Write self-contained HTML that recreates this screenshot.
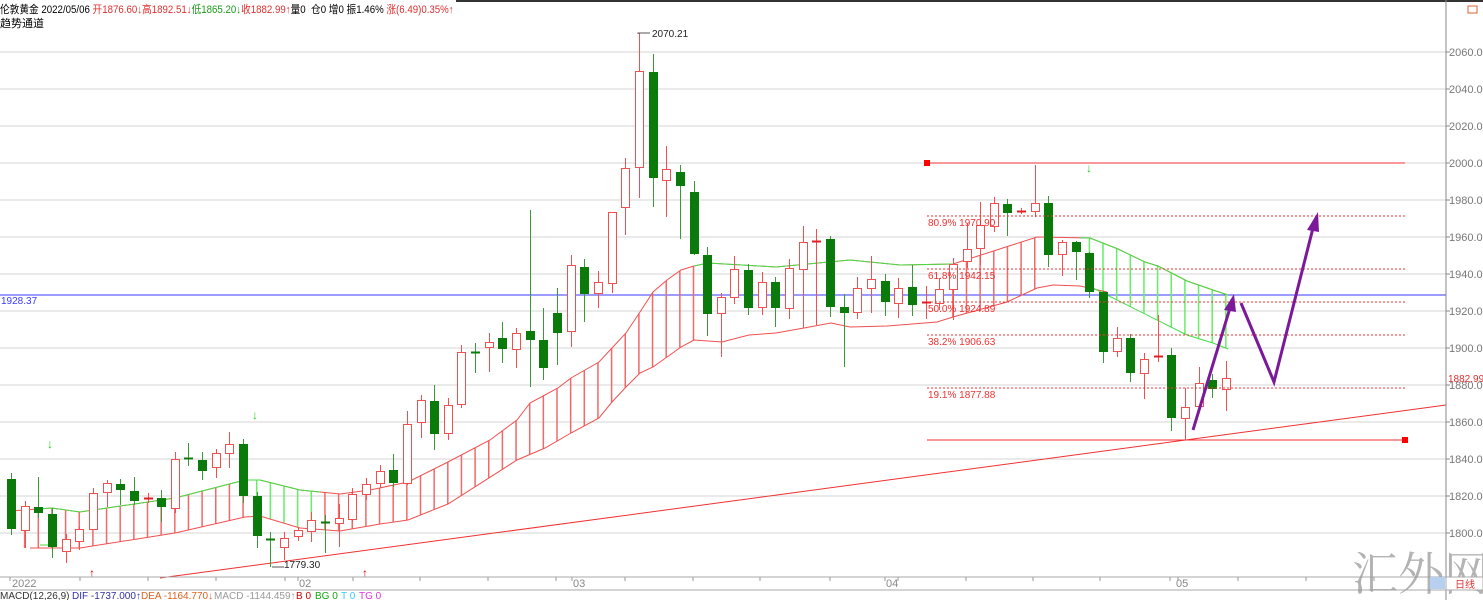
<!DOCTYPE html>
<html><head><meta charset="utf-8"><style>
html,body{margin:0;padding:0;background:#fff;width:1483px;height:600px;overflow:hidden;font-family:"Liberation Sans","Noto Sans CJK SC",sans-serif}
svg{position:absolute;left:0;top:0}
.hd{position:absolute;left:0;font-size:11px;white-space:nowrap;color:#000;line-height:12px;transform-origin:0 0}
.r{color:#e03030}.g{color:#1a9a1a}
</style></head><body>
<svg id="s" width="1483" height="600" xmlns="http://www.w3.org/2000/svg" font-family="Liberation Sans, Noto Sans CJK SC, sans-serif">
<rect x="456" y="0" width="1027" height="2" fill="#333"/>
<g id="grid"></g>
<line x1="0" y1="295" x2="1446" y2="295" stroke="#3a3aff" stroke-width="1"/>
<text x="1" y="304" font-size="10" fill="#3a3aff">1928.37</text>
<line x1="160" y1="578" x2="1446" y2="405" stroke="#f03030" stroke-width="1"/>
<g id="band"></g>
<g id="candles"></g>
<g stroke="#f03030" stroke-width="1" stroke-dasharray="2,2">
<line x1="927" y1="216" x2="1405" y2="216"/>
<line x1="927" y1="269" x2="1405" y2="269"/>
<line x1="927" y1="302" x2="1405" y2="302"/>
<line x1="927" y1="335" x2="1405" y2="335"/>
<line x1="927" y1="388" x2="1405" y2="388"/>
</g>
<g font-size="10" fill="#f03030">
<text x="928" y="226">80.9% 1970.90</text>
<text x="928" y="279">61.8% 1942.15</text>
<text x="928" y="312">50.0% 1924.89</text>
<text x="928" y="345">38.2% 1906.63</text>
<text x="928" y="398">19.1% 1877.88</text>
</g>
<line x1="927" y1="163" x2="1405" y2="163" stroke="#f03030"/>
<rect x="924" y="160" width="6" height="6" fill="#f00"/>
<line x1="927" y1="440" x2="1405" y2="440" stroke="#f03030"/>
<rect x="1402" y="437" width="6" height="6" fill="#f00"/>
<polyline points="638,34 638,33 650,33" fill="none" stroke="#555"/>
<text x="652" y="37" font-size="10" fill="#222">2070.21</text>
<polyline points="272,567 284,567" fill="none" stroke="#555"/>
<text x="284" y="568" font-size="10" fill="#222">1779.30</text>
<g fill="#2c2" font-size="12" font-weight="bold"><text x="47" y="448">↓</text><text x="252" y="419">↓</text><text x="1086" y="172">↓</text></g>
<g fill="#c00" font-size="12" font-weight="bold"><text x="89" y="577">↑</text><text x="362" y="577">↑</text></g>
<g stroke="#7a1a9a" stroke-width="3" fill="none" stroke-linejoin="miter">
<line x1="1193" y1="430" x2="1230" y2="308"/>
<polyline points="1241,303 1274,382 1313,228"/>
</g>
<g fill="#7a1a9a">
<polygon points="1234,294 1224,310 1236,312"/>
<polygon points="1318,212 1307,230 1319,232"/>
</g>
<line x1="1446" y1="0" x2="1446" y2="600" stroke="#888"/>
<g id="ax" font-size="11" fill="#777"></g>
<text x="1448" y="382" font-size="10" fill="#e03030">1882.99</text>
<line x1="0" y1="577" x2="1446" y2="577" stroke="#aaa"/>
<line x1="0" y1="590" x2="1483" y2="590" stroke="#aaa"/>
<g id="tk" stroke="#999"></g>
<g font-size="11" fill="#888"><text x="12" y="587">2022</text><text x="299" y="587">02</text><text x="573" y="587">03</text><text x="886" y="587">04</text><text x="1176" y="587">05</text></g>
<text x="1352" y="590" font-size="46" fill="#999" fill-opacity="0.75" font-family="Liberation Serif, Noto Serif CJK SC, serif">汇外网</text>
<rect x="1430" y="577" width="15" height="12" fill="#b8d0f0"/>
<rect x="1446" y="577" width="37" height="13" fill="#fff" stroke="#aaa"/>
<text x="1455" y="588" font-size="10" fill="#e03030">日线</text>
<rect x="1468" y="6" width="9" height="7" fill="none" stroke="#e06030"/>
<g font-size="10"><text x="0" y="599" fill="#333">MACD(12,26,9)</text><text x="72" y="599" fill="#3030a0">DIF -1737.000↑</text><text x="141" y="599" fill="#e06020">DEA -1164.770↓</text><text x="214" y="599" fill="#999">MACD -1144.459↑</text><text x="296" y="599" fill="#c00">B 0</text><text x="315" y="599" fill="#1a1">BG 0</text><text x="341" y="599" fill="#3cf">T 0</text><text x="359" y="599" fill="#d3d">TG 0</text></g>
</svg>
<div class="hd" style="top:4px;transform:scaleX(0.88)">伦敦黄金 2022/05/06 <span class="r">开1876.60↓高1892.51↓</span><span class="g">低1865.20↓</span><span class="r">收1882.99↑</span>量0 &nbsp;仓0 增0 振1.46% <span class="r">涨(6.49)0.35%↑</span></div>
<div class="hd" style="top:18px">趋势通道</div>
<script>
var NS="http://www.w3.org/2000/svg";
function el(p,t,a){var e=document.createElementNS(NS,t);for(var k in a)e.setAttribute(k,a[k]);document.getElementById(p).appendChild(e);return e;}
for(var k=0;k<14;k++){var y=52+37*k;el("grid","line",{x1:0,y1:y,x2:1446,y2:y,stroke:"#d4d4d4"});
 el("ax","line",{x1:1446,y1:y,x2:1450,y2:y,stroke:"#888"});
 var t=el("ax","text",{x:1449,y:y+4});t.textContent=(2060-20*k)+".00";}
[10,80,148,216,285,298,353,420,488,556,572,625,693,760,830,885,898,966,1033,1100,1170,1178,1238,1306,1374,1442].forEach(function(x){el("tk","line",{x1:x,y1:577,x2:x,y2:581});});
var C=[["g",479,529,473,535],["r",506,530,501,548],["g",507,513,477,518],["g",514,547,508,558],["r",539,551,534,563],["r",529,541,527,550],["r",493,529,488,530],["r",483,492,480,507],["g",484,490,479,505],["g",491,501,477,505],["r",498,498,493,503],["g",498,507,490,522],["r",459,508,452,513],["g",458,458,443,466],["g",460,471,452,480],["r",453,467,449,478],["r",444,453,432,468],["g",444,496,439,503],["g",496,536,492,548],["g",539,539,532,567],["r",538,547,532,560],["r",530,536,527,541],["r",520,531,512,542],["g",522,522,515,553],["r",518,523,504,547],["r",494,519,488,522],["r",484,494,478,500],["r",471,483,465,488],["g",470,483,454,487],["r",424,483,411,485],["r",400,422,395,438],["g",401,434,385,450],["r",405,433,398,440],["r",352,404,345,408],["g",352,352,343,373],["r",342,347,333,372],["g",338,349,322,363],["r",333,349,328,368],["g",331,340,210,387],["g",340,368,308,380],["g",313,333,288,365],["r",265,331,255,347],["g",267,294,259,322],["r",282,293,271,308],["r",212,283,212,293],["r",168,207,158,235],["r",71,167,33,198],["g",72,178,54,207],["r",169,180,146,217],["g",172,186,165,239],["g",192,254,181,255],["g",255,314,247,336],["r",297,313,293,357],["r",269,297,256,304],["g",270,308,264,315],["r",282,307,272,315],["g",282,308,277,327],["r",268,308,259,319],["r",242,269,226,328],["r",241,241,229,325],["g",239,307,236,317],["g",307,313,294,367],["r",288,312,277,319],["r",279,288,256,313],["g",281,302,274,316],["r",288,303,278,318],["g",287,305,265,316],["r",302,302,286,319],["r",289,303,278,310],["r",264,289,258,320],["r",249,261,223,268],["r",225,248,202,265],["r",203,226,197,232],["g",204,213,199,236],["r",211,211,208,214],["r",203,211,165,217],["g",203,255,196,267],["r",242,254,240,276],["g",242,252,241,280],["g",253,292,252,298],["g",292,352,291,363],["r",338,351,327,357],["g",338,373,334,382],["r",359,373,353,399],["r",356,356,315,362],["g",355,418,348,431],["r",407,418,388,440],["r",383,406,367,407],["g",380,389,374,398],["r",378,389,361,411]];
function X(i){return 11+13.65*i;}
var up=[[11,511],[52,508],[80,512],[175,498],[245,480],[260,480],[300,490],[340,494],[370,490],[408,482],[448,462],[490,440],[517,420],[530,403],[558,388],[571,378],[599,362],[612,348],[626,333],[640,312],[653,292],[667,280],[681,270],[694,266],[708,263],[776,267],[850,260],[900,265],[953,264],[1037,237],[1090,238],[1118,249],[1145,262],[1158,266],[1187,281],[1213,290],[1228,295]];
var lo=[[30,548],[80,548],[175,533],[245,517],[260,516],[300,528],[340,531],[380,524],[408,520],[448,504],[517,460],[545,448],[571,433],[599,418],[612,402],[626,387],[640,373],[653,367],[667,357],[681,347],[694,340],[722,342],[749,335],[776,333],[804,328],[831,323],[850,327],[887,326],[937,322],[953,317],[1007,302],[1037,288],[1053,285],[1080,286],[1107,292]];
var lg=[[1091,287],[1187,335],[1213,343],[1228,349]];
function it(p,x){for(var i=0;i<p.length-1;i++){if(x>=p[i][0]&&x<=p[i+1][0]){var f=(x-p[i][0])/(p[i+1][0]-p[i][0]);return p[i][1]+f*(p[i+1][1]-p[i][1]);}}return p[x<p[0][0]?0:p.length-1][1];}
function pl(p){return p.map(function(a){return a.join(",");}).join(" ");}
function sub(p,a,b){var r=[[a,it(p,a)]];p.forEach(function(q){if(q[0]>a&&q[0]<b)r.push(q);});r.push([b,it(p,b)]);return r;}
function vl(i0,i1,c,lowp){for(var i=i0;i<=i1;i++){var x=X(i);el("band","line",{x1:x,y1:it(up,x),x2:x,y2:it(lowp,x),stroke:c,"stroke-width":1.5});}}
vl(1,17,"#f06a6a",lo);vl(23,50,"#f06a6a",lo);vl(69,75,"#f06a6a",lo);
vl(18,22,"#66ee66",lo);vl(79,89,"#66ee66",lg);
el("band","polyline",{points:pl(up),fill:"none",stroke:"#f05050"});
el("band","polyline",{points:pl(sub(up,40,245)),fill:"none",stroke:"#44dd44"});
el("band","polyline",{points:pl(sub(up,245,320)),fill:"none",stroke:"#44dd44"});
el("band","polyline",{points:pl(sub(up,694,953)),fill:"none",stroke:"#44dd44"});
el("band","polyline",{points:pl(sub(up,1080,1228)),fill:"none",stroke:"#44dd44"});
el("band","polyline",{points:pl(lo),fill:"none",stroke:"#f05050"});
el("band","polyline",{points:"40,545 55,545",fill:"none",stroke:"#44dd44"});
el("band","polyline",{points:pl(lg),fill:"none",stroke:"#44dd44"});
C.forEach(function(c,i){var x=Math.round(X(i))+0.5;var col=c[0]=="r"?"#f05050":"#0a7a0a";var wc=c[0]=="r"?"#f05050":"#3a9a3a";
 el("candles","line",{x1:x,y1:c[3],x2:x,y2:c[4],stroke:wc});
 var h=c[2]-c[1];
 if(h<2){el("candles","line",{x1:x-4.5,y1:c[1]+0.5,x2:x+4.5,y2:c[1]+0.5,stroke:c[0]=="r"?"#e02020":"#0a7a0a","stroke-width":2});}
 else if(c[0]=="r"){el("candles","rect",{x:x-4,y:c[1]+0.5,width:8,height:h,fill:"#fff",stroke:col});}
 else{el("candles","rect",{x:x-4.5,y:c[1],width:9,height:h,fill:"#0a7a0a"});}
});
</script>
</body></html>
